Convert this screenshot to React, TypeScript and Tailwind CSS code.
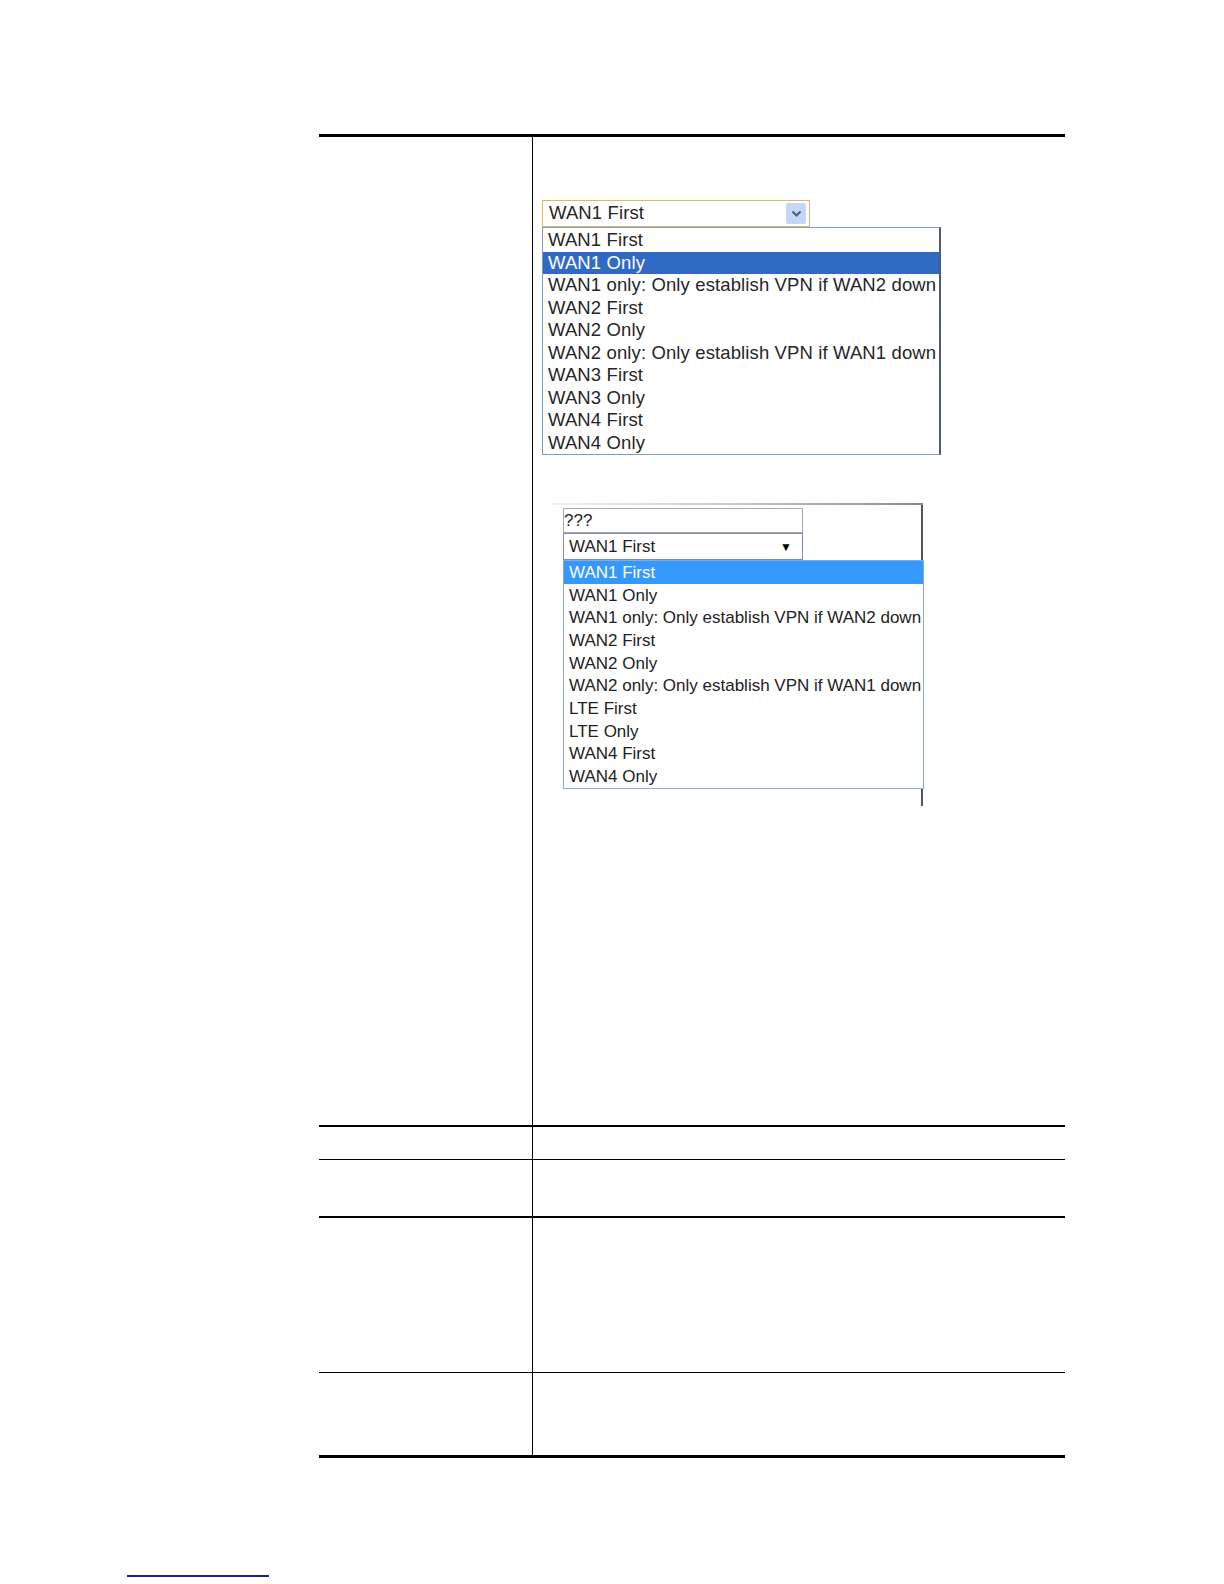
import React from 'react';

const xpOptions = [
  'WAN1 First',
  'WAN1 Only',
  'WAN1 only: Only establish VPN if WAN2 down',
  'WAN2 First',
  'WAN2 Only',
  'WAN2 only: Only establish VPN if WAN1 down',
  'WAN3 First',
  'WAN3 Only',
  'WAN4 First',
  'WAN4 Only',
];

const newOptions = [
  'WAN1 First',
  'WAN1 Only',
  'WAN1 only: Only establish VPN if WAN2 down',
  'WAN2 First',
  'WAN2 Only',
  'WAN2 only: Only establish VPN if WAN1 down',
  'LTE First',
  'LTE Only',
  'WAN4 First',
  'WAN4 Only',
];

// old style (XP) dropdown, opened, "WAN1 Only" highlighted
function XpSelect() {
  return (
    <div className="flex flex-col">
      <div className="flex h-[27px] w-[268px] items-center border border-[#d9b968] bg-white pl-[6px] pr-[3px]">
        <span className="flex-1 text-[18.5px] leading-none tracking-[0.12px] text-[#262626]">WAN1 First</span>
        <span className="flex h-[21px] w-[20px] items-center justify-center rounded-[2px] bg-[#c5d6fb]">
          <svg width="11" height="8" viewBox="0 0 11 8">
            <path d="M1.5 1.5 L5.5 5.5 L9.5 1.5" fill="none" stroke="#4d6185" strokeWidth="2.2" />
          </svg>
        </span>
      </div>
      <div className="w-[399px] border border-[#7f9db9] border-r-2 border-r-[#4f5b6b] bg-white pt-[1px]">
        {xpOptions.map((o, i) => (
          <div
            key={o}
            className={`flex h-[22.5px] items-center pl-[5px] text-[18.5px] leading-none tracking-[0.12px] whitespace-nowrap ${
              i === 1 ? 'bg-[#316ac5] text-white' : 'text-[#262626]'
            }`}
          >
            {o}
          </div>
        ))}
      </div>
    </div>
  );
}

// newer web ui dropdown, opened, first item highlighted
function NewSelect() {
  return (
    <div className="ml-[10px] mt-[48px] w-[371px]">
      <div className="h-[2px] bg-gradient-to-r from-[#f2f2f2] via-[#c8c8c8] to-[#8a8a8a]" />
      <div className="h-[301px] border-r-2 border-r-[#555] pl-[11px] pt-[3px]">
        <div className="flex h-[25px] w-[240px] items-center border border-[#a9a9a9] bg-white text-[17px] leading-none text-[#222]">
          ???
        </div>
        <div className="flex h-[27px] w-[240px] items-center border border-[#7d8ea8] bg-white pl-[5px] pr-[10px]">
          <span className="flex-1 text-[17px] leading-none text-[#222]">WAN1 First</span>
          <span className="text-[12px] leading-none text-black">▼</span>
        </div>
        <div className="w-[361px] border border-[#8fa9d6] bg-white">
          {newOptions.map((o, i) => (
            <div
              key={o}
              className={`flex h-[22.7px] items-center pl-[5px] text-[17px] leading-none whitespace-nowrap ${
                i === 0 ? 'bg-[#3399ff] text-white' : 'text-[#222]'
              }`}
            >
              {o}
            </div>
          ))}
        </div>
      </div>
    </div>
  );
}

export default function App() {
  return (
    <div className="min-h-[1584px] bg-white font-['Liberation_Sans',Arial,sans-serif]">
      <div className="pt-[134px]">
        <div className="ml-[319px] w-[746px] border-t-[3px] border-black">
          <div className="grid h-[990px] grid-cols-[213px_1fr] border-b-2 border-black">
            <div />
            <div className="border-l-[1.5px] border-black pl-[9px] pt-[63px]">
              <XpSelect />
              <NewSelect />
            </div>
          </div>
          <div className="grid h-[33px] grid-cols-[213px_1fr] border-b border-black">
            <div />
            <div className="border-l-[1.5px] border-black" />
          </div>
          <div className="grid h-[58px] grid-cols-[213px_1fr] border-b-2 border-black">
            <div />
            <div className="border-l-[1.5px] border-black" />
          </div>
          <div className="grid h-[155px] grid-cols-[213px_1fr] border-b border-black">
            <div />
            <div className="border-l-[1.5px] border-black" />
          </div>
          <div className="grid h-[85px] grid-cols-[213px_1fr] border-b-[3px] border-black">
            <div />
            <div className="border-l-[1.5px] border-black" />
          </div>
        </div>
        <div className="ml-[127px] mt-[117px] h-[2px] w-[142px] bg-[#1f1f8f]" />
      </div>
    </div>
  );
}
